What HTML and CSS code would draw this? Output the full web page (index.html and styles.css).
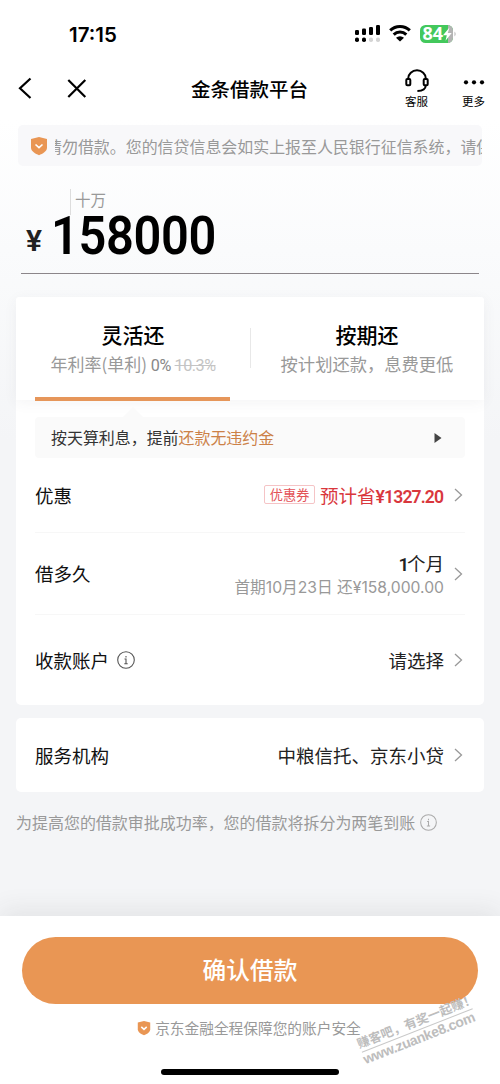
FILE: index.html
```html
<!DOCTYPE html>
<html lang="zh-CN">
<head>
<meta charset="utf-8">
<title>金条借款平台</title>
<link rel="stylesheet" href="styles.css">
</head>
<body>
<div class="screen">
  <header class="status">
    <span class="time">17:15</span>
    <svg class="status-icons" width="104" height="24" viewBox="0 0 104 24">
      <g fill="#000">
        <rect x="1" y="9" width="4" height="5" rx="1.2"/><rect x="8" y="7.500" width="4" height="6.500" rx="1.200"/><rect x="15" y="6" width="4" height="8" rx="1.200"/><rect x="22" y="4" width="4" height="10" rx="1.200"/>
        <rect x="1" y="16.500" width="4" height="4.500" rx="1.800"/><rect x="8" y="16.500" width="4" height="4.500" rx="1.800"/>
      </g>
      <g fill="#d4d4d4"><rect x="15" y="16.500" width="4" height="4.500" rx="1.800"/><rect x="22" y="16.500" width="4" height="4.500" rx="1.800"/></g>
      <g fill="none" stroke="#000" stroke-width="3"><path d="M36.200 9.400a14 14 0 0 1 19.600 0"/><path d="M39.700 13.600a9 9 0 0 1 12.600 0"/></g>
      <path d="M42 16.800a6 6 0 0 1 8 0L46 20.600z"/>
      <clipPath id="batt"><rect x="66" y="4" width="33" height="18" rx="5.500"/></clipPath>
      <g clip-path="url(#batt)"><rect x="66" y="4" width="33" height="18" fill="#43c85c"/><rect x="94" y="4" width="6" height="18" fill="#b4b4b4"/></g>
      <path d="M100.500 10.500q2.300 2.500 0 5z" fill="#b4b4b4"/>
      <text class="batt-text" x="68.500" y="18.500">84</text>
      <path d="M95.500 6.500 89 14.200h3.800l-1.300 5.500 6.200-7.800h-3.900z" fill="#fff"/>
    </svg>
  </header>

  <nav class="nav">
    <svg class="nav-left" width="90" height="28" viewBox="0 0 90 28" fill="none" stroke="#000" stroke-width="2.200"><path d="M30.500 4.500 20 14.300l10.500 9.700M68.300 6l17 17M85.300 6l-17 17"/></svg>
    <h1 class="title">金条借款平台</h1>
    <div class="nav-item service">
      <svg width="24" height="24" viewBox="0 0 24 24" fill="none" stroke="#000" stroke-width="2"><path d="M3.200 10V9.500a8.800 8.200 0 0 1 17.600 0V10M20.600 17c0 3.200-3.200 4.800-8.200 5"/><rect x="1.300" y="10" width="4" height="6.300" rx="1"/><rect x="18.700" y="10" width="4" height="6.300" rx="1"/></svg>
      <span>客服</span>
    </div>
    <div class="nav-item more">
      <svg width="24" height="24" viewBox="0 0 24 24"><circle cx="4" cy="13.300" r="2.100"/><circle cx="12" cy="13.300" r="2.100"/><circle cx="20" cy="13.300" r="2.100"/></svg>
      <span>更多</span>
    </div>
  </nav>

  <main class="content">
    <div class="notice">
      <svg width="18" height="20" viewBox="0 0 18 20"><path d="M9 1 17 3v8.500c0 4-4.500 6.200-8 7.700-3.500-1.500-8-3.700-8-7.700V3z" fill="#e99654"/><path d="m5.500 8.500 3.500 3.200 3.500-3.200" fill="none" stroke="#fff" stroke-width="1.600"/></svg>
      <div class="marquee"><span>请勿借款。您的信贷信息会如实上报至人民银行征信系统，请保持</span></div>
    </div>

    <section class="amount">
      <div class="unit">十万</div>
      <div class="figure"><span class="yen">¥</span><span class="digits">158000</span></div>
    </section>

    <section class="tabs">
      <div class="tab active">
        <b>灵活还</b>
        <p>年利率(单利) <span class="rate">0%</span> <s>10.3%</s></p>
      </div>
      <div class="tab">
        <b>按期还</b>
        <p>按计划还款，息费更低</p>
      </div>
    </section>

    <section class="card details">
      <div class="tip"><span>按天算利息，提前<em>还款无违约金</em></span><svg width="8" height="12" viewBox="0 0 8 12"><path d="M.5 1v10l7-5z" fill="#444"/></svg></div>
      <div class="row coupon">
        <span class="label">优惠</span>
        <span class="value"><span class="tag">优惠券</span><span class="save">预计省<b>¥1327.20</b></span></span>
        <svg class="chev" width="9" height="14" viewBox="0 0 9 14"><path d="m1 1 6.500 6L1 13"/></svg>
      </div>
      <div class="row term">
        <span class="label">借多久</span>
        <span class="value stack"><span><b>1</b>个月</span><small>首期10月23日 还¥158,000.00</small></span>
        <svg class="chev" width="9" height="14" viewBox="0 0 9 14"><path d="m1 1 6.500 6L1 13"/></svg>
      </div>
      <div class="row account">
        <span class="label">收款账户</span>
        <svg class="info" width="18" height="18" viewBox="0 0 18 18"><circle cx="9" cy="9" r="8.300"/><path d="M9 5v1.500M7.500 8H9v4.700M7.300 12.700h3.400"/></svg>
        <span class="value">请选择</span>
        <svg class="chev" width="9" height="14" viewBox="0 0 9 14"><path d="m1 1 6.500 6L1 13"/></svg>
      </div>
    </section>

    <section class="card org">
      <div class="row">
        <span class="label">服务机构</span>
        <span class="value">中粮信托、京东小贷</span>
        <svg class="chev" width="9" height="14" viewBox="0 0 9 14"><path d="m1 1 6.500 6L1 13"/></svg>
      </div>
    </section>

    <p class="note">为提高您的借款审批成功率，您的借款将拆分为两笔到账<svg class="info light" width="17" height="17" viewBox="0 0 18 18"><circle cx="9" cy="9" r="8.300"/><path d="M9 5v1.500M7.500 8H9v4.700M7.300 12.700h3.400"/></svg></p>
  </main>

  <footer class="footer">
    <button class="confirm">确认借款</button>
    <div class="safe">
      <svg width="14" height="16" viewBox="0 0 18 20"><path d="M9 1 17 3v8.500c0 4-4.500 6.200-8 7.700-3.500-1.500-8-3.700-8-7.700V3z" fill="#e99654"/><path d="m5.500 8.500 3.500 3.200 3.500-3.200" fill="none" stroke="#fff" stroke-width="2"/></svg>
      <span>京东金融全程保障您的账户安全</span>
    </div>
    <div class="home"></div>
  </footer>

  <svg class="watermark" width="150" height="89" viewBox="0 0 150 89">
    <g transform="translate(11 60) rotate(-21.500)">
      <text class="wm-cn" x="-1" y="-2" textLength="126">赚客吧，有奖一起赚！</text>
      <path d="M0 2.500h119" stroke="#c9c9c9"/>
      <text class="wm-url" x="-1" y="15" textLength="119">www.zuanke8.com</text>
    </g>
  </svg>
</div>
</body>
</html>
```

FILE: styles.css
```css
* { box-sizing: border-box; }
body, h1, p { margin: 0; }
body { font-family: "Noto Sans CJK SC", sans-serif; color: #111; }
svg { display: block; flex: none; }

.screen {
  position: relative;
  width: 500px;
  height: 1084px;
  display: flex;
  flex-direction: column;
  overflow: hidden;
  background: linear-gradient(#fff 120px, #fafbfc 250px, #f4f5f7 440px);
}

.status {
  height: 60px;
  padding: 21px 42px 0 69px;
  display: flex;
  justify-content: space-between;
}
.time { font: 600 20.5px/27px Inter, sans-serif; color: #000; }
.batt-text { font: 700 18px "Noto Sans", sans-serif; fill: #fff; }

.nav { height: 65px; display: flex; padding-right: 14px; }
.nav-left { margin-top: 14px; }
.title {
  flex: 1;
  padding-left: 101px;
  font-size: 19.5px;
  font-weight: 500;
  line-height: 57px;
  color: #000;
  white-space: nowrap;
}
.nav-item {
  width: 25px;
  display: flex;
  flex-direction: column;
  align-items: center;
  padding-top: 9px;
  font-size: 11.5px;
  line-height: 16px;
  white-space: nowrap;
  color: #000;
}
.service { margin-right: 32px; }

.content { flex: 1; display: flex; flex-direction: column; padding: 0 16px; }

.notice {
  height: 41px;
  margin: 0 2px;
  padding-left: 12px;
  display: flex;
  align-items: center;
  gap: 7px;
  border-radius: 5px;
  background: #f8f8fa;
}
.marquee { flex: 1; overflow: hidden; display: flex; color: #999; font-size: 15.95px; line-height: 24px; white-space: nowrap; }
.marquee span { margin-left: -9px; }

.amount { height: 131px; margin: 0 5px; padding-top: 23px; }
.unit {
  width: 60px;
  height: 26px;
  margin-left: 49px;
  padding-left: 4px;
  border-left: 1px solid #ddd;
  font-size: 15.5px;
  line-height: 20px;
  color: #999;
}
.figure { height: 59px; display: flex; border-bottom: 1px solid #8c868a; color: #000; }
.yen { width: 30px; padding: 5px 0 0 5px; font: 600 30px/42px Roboto, sans-serif; color: #222; }
.digits {
  font: 600 53px/43px Roboto, sans-serif;
  letter-spacing: -0.4px;
  transform: scaleX(.92);
  transform-origin: 0 0;
}

.tabs {
  position: relative;
  height: 103px;
  display: grid;
  grid-template-columns: 1fr 1fr;
  background: #fff;
  border-radius: 3px 3px 0 0;
  box-shadow: 0 3px 14px rgba(60, 60, 80, .06);
  text-align: center;
}
.tab { padding-top: 22px; display: flex; flex-direction: column; align-items: center; }
.tab + .tab { background: linear-gradient(#e8e8e8, #e8e8e8) 0 31px / 1px 40px no-repeat; }
.tab b { font-size: 21px; font-weight: 500; line-height: 30px; color: #000; }
.tab p { margin-top: 1px; font-size: 17.3px; line-height: 28px; color: #999; white-space: nowrap; }
.tab.active p { font-size: 17px; }
.active::after { content: ""; width: 195px; height: 4px; margin: 17px 1px 0 -1px; background: #e6965a; }
.tab p .rate, .tab p s { font-family: Roboto, sans-serif; font-size: 16.2px; letter-spacing: -0.5px; }
.tab p .rate { color: #888; }
.tab p s { color: #c4c4c4; }

.card { background: #fff; border-radius: 5px; padding: 0 19px; }
.details { height: 305px; padding-top: 17px; border-radius: 0 0 5px 5px; }
.tip {
  position: relative;
  height: 41px;
  padding: 0 23px 0 16px;
  display: flex;
  align-items: center;
  justify-content: space-between;
  border-radius: 4px;
  background: #fafafa;
  font-size: 15.95px;
  color: #333;
}
.tip span { padding-bottom: 2px; }
.tip::before {
  content: "";
  position: absolute;
  left: 88px;
  top: -10px;
  border: 10px solid transparent;
  border-top: 0;
  border-bottom-color: #fafafa;
}
.tip em { font-style: normal; color: #cc8147; }

.row { height: 74px; display: flex; align-items: center; font-size: 18.5px; line-height: 26px; }
.term { height: 83px; border-top: 1px solid #f7f7f7; border-bottom: 1px solid #f7f7f7; }
.account { height: 90px; }
.label { padding-bottom: 1px; color: #111; }
.value { margin-left: auto; padding-bottom: 1px; display: flex; align-items: center; color: #222; }
.chev { margin: 0 2px 0 10px; fill: none; stroke: #999; stroke-width: 1.3; }
.tag {
  height: 19px;
  width: 51px;
  margin-right: 5px;
  border: 1px solid #f5c4c6;
  border-radius: 2px;
  text-align: center;
  font-size: 13.2px;
  line-height: 17px;
  color: #e35358;
}
.save { color: #d9373d; }
.save b { font: 600 17.6px Roboto, sans-serif; letter-spacing: -0.9px; margin-right: 0.9px; }
.stack { flex-direction: column; align-items: flex-end; padding: 3px 0 0; line-height: 24px; }
.stack b { font: 600 18.5px Roboto, sans-serif; letter-spacing: -2px; }
.stack small { font-family: Inter, "Noto Sans CJK SC", sans-serif; font-size: 15.7px; line-height: 23px; color: #999; }
.info { margin-left: 8px; fill: none; stroke: #555; stroke-width: 1.1; }
.light { stroke: #aaa; margin-left: 5px; }

.org { height: 74px; margin-top: 13px; }
.note { margin-top: 18px; display: flex; align-items: center; font-size: 15.98px; line-height: 24px; color: #999; white-space: nowrap; }

.footer {
  height: 168px;
  padding: 21px 22px 0;
  display: flex;
  flex-direction: column;
  align-items: center;
  background: #fff;
  box-shadow: 0 -6px 24px rgba(50, 50, 60, .09);
}
.confirm {
  width: 100%;
  height: 67px;
  padding: 0 0 3px;
  border: 0;
  border-radius: 34px;
  background: #e99654;
  color: #fff;
  font: 500 23.7px "Noto Sans CJK SC", sans-serif;
}
.safe { margin: 12px 2px 0 0; display: flex; align-items: center; gap: 4px; font-size: 14.7px; line-height: 24px; color: #999; }
.home { width: 178px; height: 6px; margin-top: 29px; border-radius: 3px; background: #000; }

.watermark { position: absolute; left: 350px; top: 990px; }
.wm-cn { font: 700 12.5px "Noto Sans CJK SC", sans-serif; fill: #bdbdbd; }
.wm-url { font: 700 14px "Liberation Sans", sans-serif; fill: #bdbdbd; }
```
